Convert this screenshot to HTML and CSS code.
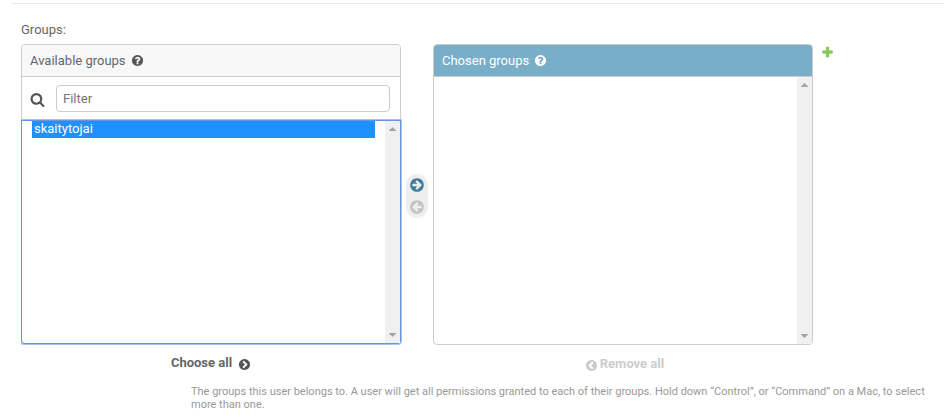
FILE: index.html
```html
<!DOCTYPE html>
<html lang="en">
<head>
<meta charset="utf-8">
<title>Groups</title>
<link rel="stylesheet" href="styles.css">
</head>
<body>
<svg class="defs" width="0" height="0" aria-hidden="true">
  <symbol id="help" viewBox="0 0 1792 1792"><path d="M1024 1376v-192q0-14-9-23t-23-9h-192q-14 0-23 9t-9 23v192q0 14 9 23t23 9h192q14 0 23-9t9-23zm256-672q0-88-55.500-163t-138.500-116-170-41q-243 0-371 213-15 24 8 42l132 100q7 6 19 6 16 0 25-12 53-68 86-92 34-24 86-24 48 0 85.500 26t37.500 59q0 38-20 61t-68 45q-63 28-115.500 86.500t-52.500 125.500v36q0 14 9 23t23 9h192q14 0 23-9t9-23q0-19 21.500-49.500t54.500-49.500q32-18 49-28.500t46-35 44.500-48 28-60.500 12.500-81zm384 192q0 209-103 385.500t-279.500 279.500-385.500 103-385.500-103-279.500-279.500-103-385.500 103-385.500 279.500-279.500 385.500-103 385.500 103 279.500 279.500 103 385.500z"/></symbol>
  <symbol id="arrow" viewBox="0 0 1792 1792"><path d="M1413 896q0-27-18-45l-91-91-362-362q-18-18-45-18t-45 18l-91 91q-18 18-18 45t18 45l189 189h-502q-26 0-45 19t-19 45v128q0 26 19 45t45 19h502l-189 189q-19 19-19 45t19 45l91 91q18 18 45 18t45-18l362-362 91-91q18-18 18-45zm251 0q0 209-103 385.500t-279.500 279.500-385.500 103-385.500-103-279.500-279.500-103-385.500 103-385.500 279.500-279.500 385.500-103 385.500 103 279.500 279.500 103 385.500z"/></symbol>
  <symbol id="chevron" viewBox="0 0 1792 1792"><path d="M845 1395l454-454q19-19 19-45t-19-45l-454-454q-19-19-45-19t-45 19l-102 102q-19 19-19 45t19 45l307 307-307 307q-19 19-19 45t19 45l102 102q19 19 45 19t45-19zm819-499q0 209-103 385.500t-279.500 279.500-385.500 103-385.500-103-279.500-279.500-103-385.500 103-385.500 279.500-279.500 385.500-103 385.500 103 279.500 279.500 103 385.500z"/></symbol>
  <symbol id="search" viewBox="0 0 1792 1792"><path d="M1216 832q0-185-131.500-316.500t-316.500-131.500-316.500 131.500-131.500 316.500 131.500 316.500 316.500 131.500 316.500-131.500 131.500-316.500zm512 832q0 52-38 90t-90 38q-54 0-90-38l-343-342q-179 124-399 124-143 0-273.500-55.500t-225-150-150-225-55.500-273.500 55.500-273.500 150-225 225-150 273.500-55.500 273.500 55.500 225 150 150 225 55.500 273.500q0 220-124 399l343 343q37 37 37 90z"/></symbol>
  <symbol id="plus" viewBox="0 0 1792 1792"><path d="M1600 736v192q0 40-28 68t-68 28h-416v416q0 40-28 68t-68 28h-192q-40 0-68-28t-28-68v-416h-416q-40 0-68-28t-28-68v-192q0-40 28-68t68-28h416v-416q0-40 28-68t68-28h192q40 0 68 28t28 68v416h416q40 0 68 28t28 68z"/></symbol>
</svg>
<main class="form-row">
  <label class="row-label">Groups:</label>
  <div class="selector">
    <section class="column">
      <div class="panel available">
        <h2 class="title">Available groups <svg class="help"><use href="#help"/></svg></h2>
        <div class="filter">
          <svg class="search-icon"><use href="#search"/></svg>
          <input class="filter-input" type="text" placeholder="Filter">
        </div>
        <div class="list focused">
          <div class="options"><div class="option">skaitytojai</div></div>
          <div class="scrollbar"><i class="up"></i><i class="down"></i></div>
        </div>
      </div>
      <a class="all choose">Choose all <svg class="all-icon"><use href="#chevron"/></svg></a>
    </section>
    <div class="chooser">
      <svg class="move add"><use href="#arrow"/></svg>
      <svg class="move remove"><use href="#arrow"/></svg>
    </div>
    <section class="column">
      <div class="panel chosen">
        <h2 class="title">Chosen groups <svg class="help"><use href="#help"/></svg></h2>
        <div class="list">
          <div class="options"></div>
          <div class="scrollbar"><i class="up"></i><i class="down"></i></div>
        </div>
      </div>
      <a class="all clear"><svg class="all-icon"><use href="#chevron"/></svg> Remove all</a>
    </section>
    <svg class="plus"><use href="#plus"/></svg>
  </div>
  <p class="help-text">The groups this user belongs to. A user will get all permissions granted to each of their groups. Hold down “Control”, or “Command” on a Mac, to select more than one.</p>
</main>
</body>
</html>
```
FILE: styles.css
```css
* { box-sizing: border-box; }
body { margin: 0; background: #fff; color: #666; font: 13px/16px Roboto, "Liberation Sans", sans-serif; overflow: hidden; }
.defs { display: none; }
svg { fill: currentColor; flex: none; }
.form-row { margin: 3px 6px 0 11px; padding: 18px 0 0 10px; border-top: 1px solid #eaeaea; }
.row-label { display: block; height: 22px; }
.selector { display: flex; align-items: flex-start; }
.column { width: 380px; }
.panel { display: flex; flex-direction: column; height: 301px; border: 1px solid #ccc; border-radius: 4px; }
.available { height: 300px; }
.title { display: flex; align-items: center; gap: 5px; height: 32px; margin: 0; padding: 0 8px; border-bottom: 1px solid #ccc; border-radius: 3px 3px 0 0; background: #f8f8f8; font-size: 13px; font-weight: 400; }
.chosen .title { background: #79aec8; color: #fff; }
.help { width: 13px; height: 13px; color: #555; }
.chosen .help { color: #fff; }
.filter { display: flex; align-items: center; gap: 11px; height: 43px; padding: 0 10px 0 8px; }
.search-icon { width: 15px; height: 15px; margin-top: 1px; color: #555; }
.filter-input { flex: 1; height: 27px; padding: 0 6px; border: 1px solid #ccc; border-radius: 4px; font: inherit; }
.filter-input::placeholder { color: #757575; opacity: 1; }
.list { display: flex; flex: 1; }
.focused { margin: 0 -1px -1px; border: 1px solid #6795e5; border-radius: 0 0 3px 3px; box-shadow: 0 0 0 1px #a9c3f0; clip-path: inset(-1px -1px -1px 0); }
.options { flex: 1; padding: 0 10px; }
.option { height: 17px; padding: 0 2px; background: #1e90ff; color: #fff; }
.scrollbar { display: flex; flex-direction: column; justify-content: space-between; align-items: center; width: 15px; padding: 6px 0; background: #f0f0f0; }
.up, .down { width: 8px; height: 4px; background: #a3a3a3; clip-path: polygon(50% 0, 100% 100%, 0 100%); }
.down { clip-path: polygon(0 0, 100% 0, 50% 100%); }
.chooser { display: flex; flex-direction: column; align-items: center; gap: 8px; width: 22px; height: 44px; margin: 130px 5px 0; padding: 4px 0; border-radius: 11px; background: #eee; }
.move { width: 16px; height: 16px; margin: -1px 0; color: #417f9f; }
.remove { color: #c4c4c4; transform: scaleX(-1); }
.all { display: flex; align-items: center; justify-content: center; height: 16px; margin-top: 11px; font-weight: 700; }
.choose { gap: 6px; }
.clear { gap: 2px; padding-left: 3px; color: #ccc; }
.all-icon { width: 13px; height: 13px; margin-top: 2px; color: #555; }
.clear .all-icon { color: #ccc; transform: scaleX(-1); }
.plus { width: 13px; height: 13px; margin: 2px 0 0 8px; color: #87c655; stroke: currentColor; stroke-width: 60; }
.help-text { width: 740px; margin: 13px 0 0 170px; color: #999; font-size: 11px; line-height: 13px; }
```
